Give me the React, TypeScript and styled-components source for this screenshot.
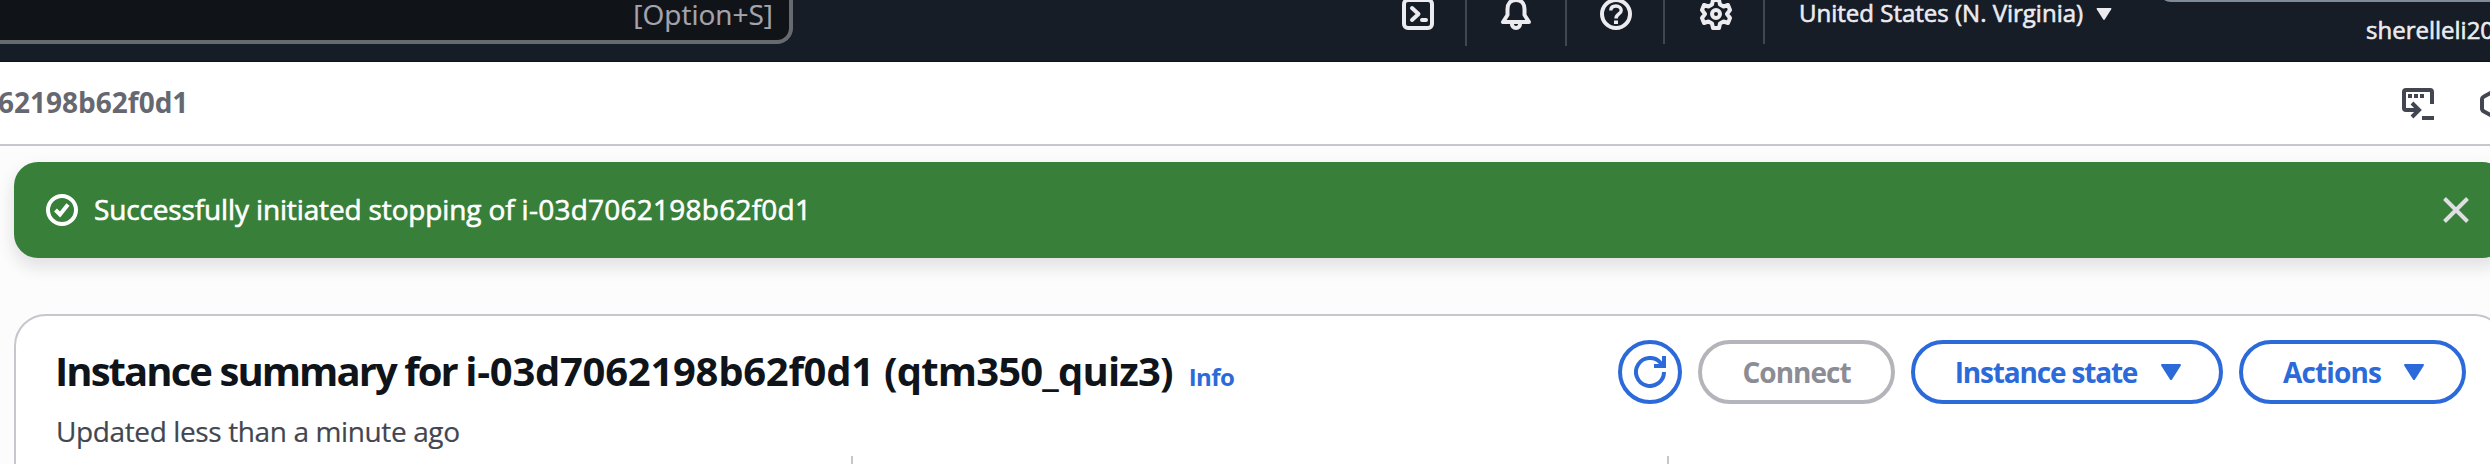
import React from 'react';
import styled, { createGlobalStyle } from 'styled-components';

const GlobalStyle = createGlobalStyle`
  * { box-sizing: border-box; }
  html, body { margin: 0; padding: 0; }
  body {
    background: #fcfcfd;
    font-family: "Open Sans", "Noto Sans", sans-serif;
    overflow: hidden;
  }
`;

const Page = styled.div`
  width: 2490px;
  height: 464px;
  overflow: hidden;
  display: flex;
  flex-direction: column;
`;

const Label = styled.span<{ $size: number; $weight?: number; $color: string; $spacing?: number }>`
  font-size: ${(p) => p.$size}px;
  font-weight: ${(p) => p.$weight ?? 400};
  color: ${(p) => p.$color};
  letter-spacing: ${(p) => p.$spacing ?? 0}px;
  line-height: 40px;
  white-space: nowrap;
  -webkit-text-stroke: ${(p) => (p.$weight === 500 ? '0.6px' : p.$weight === 700 ? '0' : '0.2px')};
`;

const Tracked = styled.span<{ $spacing: number }>`
  letter-spacing: ${(p) => p.$spacing}px;
`;

const TopNav = styled.header`
  display: flex;
  align-items: flex-start;
  flex: none;
  height: 62px;
  background: #161d26;
  border-bottom: 1px solid #130f20;
  overflow: hidden;
`;

const SearchBox = styled.div`
  flex: none;
  display: flex;
  justify-content: flex-end;
  width: 793px;
  height: 72px;
  margin-top: -28px;
  padding: 18px 16px 0 0;
  background: #101318;
  border: 4px solid #686a72;
  border-left: 0;
  border-radius: 0 16px 16px 0;
`;

const NavTools = styled.div`
  flex: none;
  display: flex;
  margin-left: 577px;
`;

const NavTool = styled.div<{ $width: number; $height: number; $pad: number }>`
  width: ${(p) => p.$width}px;
  height: ${(p) => p.$height}px;
  padding-left: ${(p) => p.$pad}px;
  border-right: 2px solid #424650;

  svg { display: block; margin-top: -2px; }
`;

const Region = styled.div`
  flex: none;
  display: flex;
  width: 393px;
  padding-left: 34px;
  gap: 13px;

  span { margin-top: -7px; }
  svg { margin-top: 8px; }
`;

const Account = styled.div`
  flex: none;
  width: 332px;
  display: flex;
  flex-direction: column;
  align-items: flex-start;

  span { margin: 8px 0 0 208px; }
`;

const AccountOutline = styled.div`
  align-self: stretch;
  height: 26px;
  margin: -24px -20px 0 0;
  border: 2px solid #7f8b9b;
  border-radius: 16px;
`;

const BreadcrumbBar = styled.nav`
  flex: none;
  display: flex;
  justify-content: space-between;
  height: 84px;
  background: #fff;
  border-bottom: 2px solid #c6c6cd;
  overflow: hidden;

  > span { margin: 20px 0 0 -2px; }
`;

const PageTools = styled.div`
  display: flex;
  gap: 46px;
  margin: 26px -22px 0 0;
`;

const Content = styled.main`
  flex: none;
  display: flex;
  flex-direction: column;
  gap: 56px;
  width: 2506px;
  padding: 16px 0 0 14px;
`;

const Flash = styled.div`
  display: flex;
  align-items: center;
  height: 96px;
  padding: 0 34px 0 32px;
  border-radius: 24px;
  background: #387f39;
  box-shadow: 0 8px 16px 2px rgba(0, 7, 22, 0.1);

  > span { margin: -3px auto 0 16px; }
`;

const Card = styled.section`
  display: flex;
  flex-direction: column;
  height: 180px;
  padding: 24px 38px 0 41px;
  background: #fff;
  border: 2px solid #c6c6cd;
  border-radius: 32px;
`;

const CardHeader = styled.div`
  flex: none;
  display: flex;
  justify-content: space-between;
  height: 71px;
`;

const Title = styled.div`
  display: flex;
  align-items: baseline;
  gap: 16px;
  margin-top: 11px;
  margin-left: -2px;
`;

const Subtitle = styled.div`
  display: flex;
  margin-left: -1px;
`;

const Actions = styled.div`
  display: flex;
  gap: 16px;
`;

const Button = styled.button<{ $width: number; $disabled?: boolean; $gap?: number }>`
  display: flex;
  align-items: center;
  justify-content: center;
  gap: ${(p) => p.$gap ?? 0}px;
  width: ${(p) => p.$width}px;
  height: 64px;
  padding: 0 0 0 ${(p) => (p.$gap ? 2 : 0)}px;
  background: #fff;
  color: ${(p) => (p.$disabled ? '#8c8c94' : '#2c6ad9')};
  border: 4px solid ${(p) => (p.$disabled ? '#b4b4bb' : '#2c6ad9')};
  border-radius: 32px;
  font-family: inherit;

  span { margin-top: -1px; }
`;

const Columns = styled.div`
  flex: none;
  display: grid;
  grid-template-columns: 796px 816px 1fr;
  margin-top: 5px;
`;

const Column = styled.div`
  height: 60px;
  border-right: 2px solid #c6c6cd;

  &:last-child { border-right: 0; }
`;

type IconProps = { color: string; children: React.ReactNode };

const Icon = ({ color, children }: IconProps) => (
  <svg width={32} height={32} viewBox="0 0 32 32" fill="none" stroke={color} strokeWidth={4}>
    {children}
  </svg>
);

const Caret = ({ color, width, height }: { color: string; width: number; height: number }) => (
  <svg width={width} height={height} viewBox="0 0 20 16">
    <path d="M1.2 0h17.6c1 0 1.5 1 .9 1.8l-8.7 13.6c-.5.8-1.5.8-2 0L.3 1.8C-.3 1 .2 0 1.2 0z" fill={color} />
  </svg>
);

const LIGHT = '#ebebf0';
const BLUE = '#2c6ad9';

export default function App() {
  return (
    <Page>
      <GlobalStyle />
      <TopNav>
        <SearchBox>
          <Label $size={28} $color="#a4a4ad">[Option+S]</Label>
        </SearchBox>
        <NavTools>
          <NavTool $width={97} $height={46} $pad={32}>
            <Icon color={LIGHT}>
              <rect x="2" y="2" width="28" height="28" rx="4" />
              <path d="M10 10l6.5 6-6.5 6M20 22h4" strokeLinecap="round" strokeLinejoin="round" />
            </Icon>
          </NavTool>
          <NavTool $width={100} $height={46} $pad={33}>
            <Icon color={LIGHT}>
              <path d="M16 2C10.5 2 7.5 6 7.5 11v6L3 24h26l-4.5-7v-6C24.5 6 21.5 2 16 2z" strokeLinejoin="round" />
              <path d="M11.8 25c0 3 1.8 5 4.2 5s4.2-2 4.2-5" />
            </Icon>
          </NavTool>
          <NavTool $width={98} $height={44} $pad={33}>
            <Icon color={LIGHT}>
              <circle cx="16" cy="16" r="14" />
              <path d="M10.8 12.5C10.8 9.5 13 8 16 8s5.2 1.7 5.2 4.4C21.2 16 16 16 16 20.5" strokeWidth="3.4" />
              <path d="M16 22.5v3.5" />
            </Icon>
          </NavTool>
          <NavTool $width={100} $height={44} $pad={35}>
            <Icon color={LIGHT}>
              <path d="M13 2h6l1 4.5 3.5 2L28 7l2 5-3 4 3 4-2 5-4.5-1.5-3.5 2L19 30h-6l-1-4.5-3.5-2L4 25l-2-5 3-4-3-4 2-5 4.5 1.5 3.5-2z" strokeLinejoin="round" />
              <circle cx="16" cy="16" r="4" />
            </Icon>
          </NavTool>
        </NavTools>
        <Region>
          <Label $size={24} $weight={500} $color={LIGHT}>United States (N. Virginia)</Label>
          <Caret color={LIGHT} width={16} height={12} />
        </Region>
        <Account>
          <AccountOutline />
          <Label $size={24} $weight={500} $color={LIGHT}>sherelleli20</Label>
        </Account>
      </TopNav>

      <BreadcrumbBar>
        <Label $size={28} $weight={700} $color="#656871">62198b62f0d1</Label>
        <PageTools>
          <Icon color="#424650">
            <path d="M30 16V4q0-2-2-2H4Q2 2 2 4v16q0 2 2 2h13M20 30h12" />
            <path d="M10 15l7 7-7 7" />
            <path d="M6 8h4M12 8h4M18 8h4" />
          </Icon>
          <Icon color="#424650">
            <path d="M16 2l12 6.5q2 1 2 3v9q0 2-2 3L16 30 4 23.5q-2-1-2-3v-9q0-2 2-3z" />
          </Icon>
        </PageTools>
      </BreadcrumbBar>

      <Content>
        <Flash>
          <Icon color="#fff">
            <circle cx="16" cy="16" r="14" />
            <path d="M9.5 16l4.5 4.5 8-10" />
          </Icon>
          <Label $size={28} $weight={500} $color="#fff">
            <Tracked $spacing={-0.14}>Successfully initiated stopping of </Tracked>
            <Tracked $spacing={0.24}>i-03d7062198b62f0d1</Tracked>
          </Label>
          <Icon color="#dedee3">
            <path d="M4.5 4.5l23 23M27.5 4.5l-23 23" />
          </Icon>
        </Flash>

        <Card>
          <CardHeader>
            <Title>
              <Label $size={40} $weight={700} $color="#0f141a">
                <Tracked $spacing={-1.93}>Instance summary for </Tracked>
                <Tracked $spacing={-0.28}>i-03d7062198b62f0d1 </Tracked>
                <Tracked $spacing={-0.82}>(qtm350_quiz3)</Tracked>
              </Label>
              <Label $size={24} $weight={700} $color={BLUE} $spacing={-0.6}>Info</Label>
            </Title>
            <Actions>
              <Button $width={64}>
                <Icon color={BLUE}>
                  <path d="M30 16a14 14 0 1 1-3.5-9.3L29 10M20 10h10V0" />
                </Icon>
              </Button>
              <Button $width={197} $disabled>
                <Label $size={28} $weight={700} $color="inherit" $spacing={-1}>Connect</Label>
              </Button>
              <Button $width={312} $gap={24}>
                <Label $size={28} $weight={700} $color="inherit" $spacing={-1.18}>Instance state</Label>
                <Caret color={BLUE} width={20} height={16} />
              </Button>
              <Button $width={227} $gap={23}>
                <Label $size={28} $weight={700} $color="inherit" $spacing={-0.87}>Actions</Label>
                <Caret color={BLUE} width={20} height={16} />
              </Button>
            </Actions>
          </CardHeader>
          <Subtitle>
            <Label $size={28} $color="#424650" $spacing={-0.38}>Updated less than a minute ago</Label>
          </Subtitle>
          <Columns>
            <Column />
            <Column />
            <Column />
          </Columns>
        </Card>
      </Content>
    </Page>
  );
}
